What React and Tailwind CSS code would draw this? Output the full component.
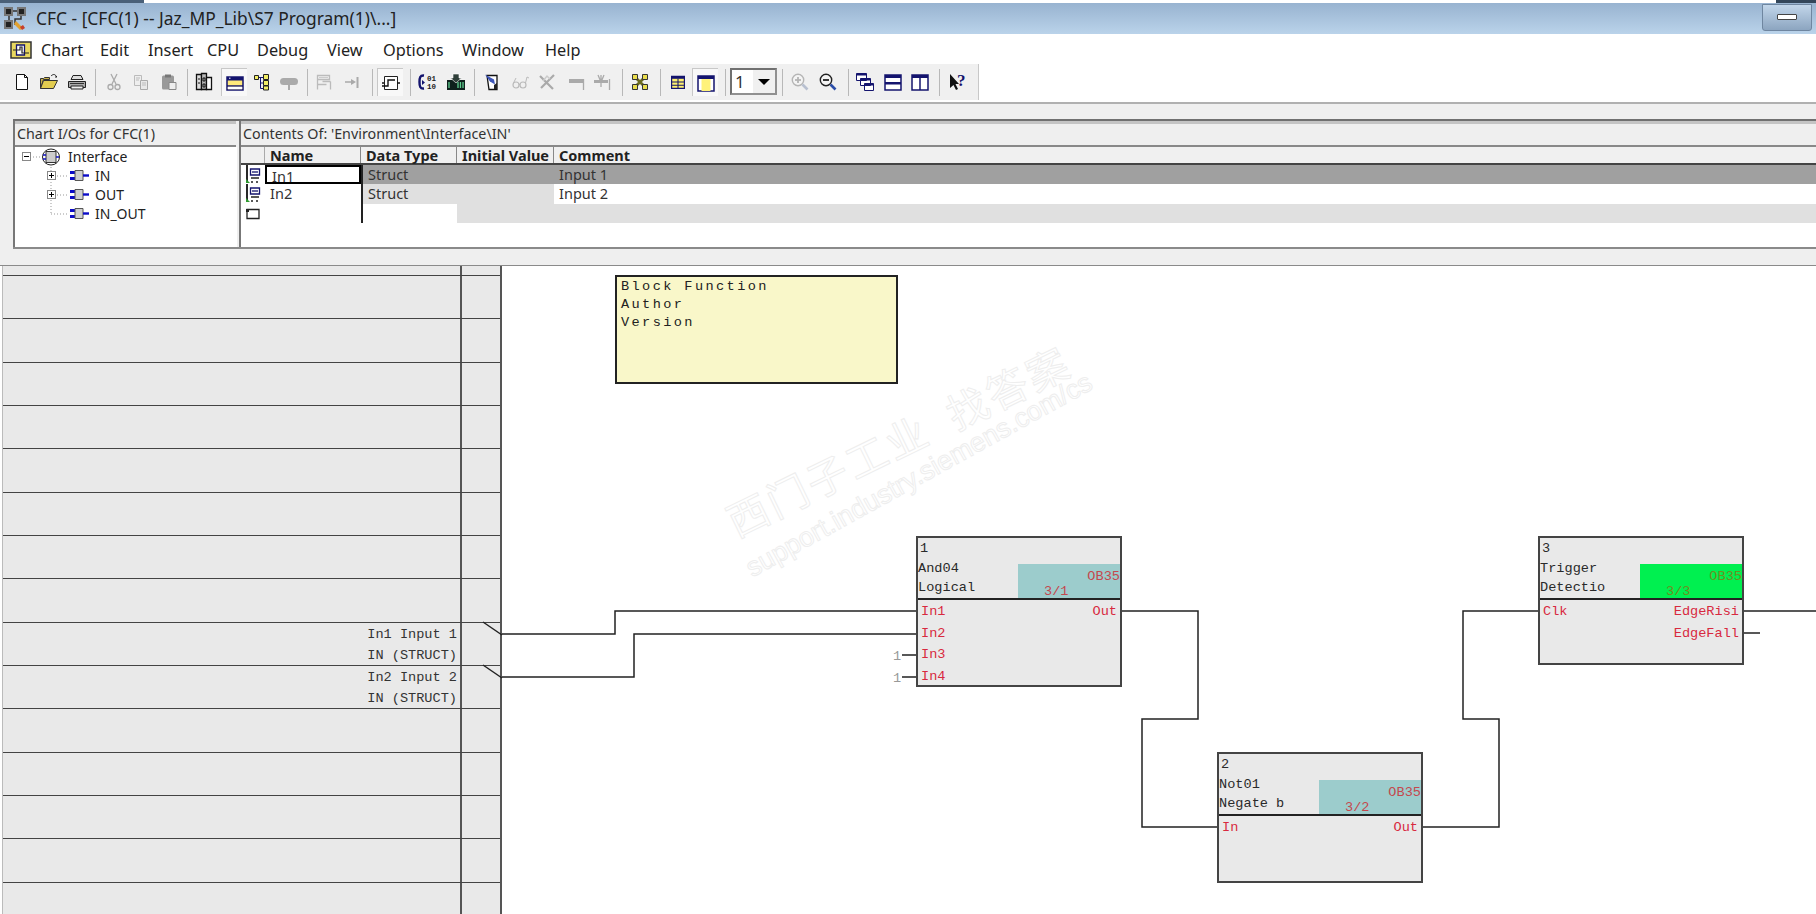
import React from "react";

const sans = "font-['Noto_Sans',sans-serif]";
const mono = "font-['Liberation_Mono',monospace]";

// Toolbar icons
const Svg = ({ children, size = 20 }) => (
  <svg width={size} height={size} viewBox="0 0 20 20" fill="none">
    {children}
  </svg>
);

const NewDoc = () => (
  <Svg>
    <path d="M4.5 2.5h8l3 3v12h-11z" fill="#fff" stroke="#111" />
    <path d="M12.5 2.5v3h3" stroke="#111" />
  </Svg>
);
const OpenFile = () => (
  <Svg>
    <path d="M1.5 16.5v-10h3l1-1h5v2h-6l-3 9z" fill="#c9b24a" stroke="#333" />
    <path d="M1.5 16.5l3-8h14l-4 8z" fill="#e2cc50" stroke="#333" />
    <path d="M12 4c2-2 4-2 5 0l1 1-2 0" stroke="#222" />
  </Svg>
);
const PrintIcon = () => (
  <Svg>
    <path d="M6 3.5h8l2 4H4z" fill="#ddd" stroke="#222" />
    <path d="M1.5 9.5h17v6h-17z" fill="#aaa" stroke="#222" />
    <path d="M4 14h12v3H4z" fill="#eee" stroke="#222" />
    <path d="M3 11.5h14" stroke="#333" />
  </Svg>
);
const CutIcon = () => (
  <Svg>
    <path d="M7 2l5 10M13 2L8 12" stroke="#aaa" strokeWidth="1.3" />
    <circle cx="6.5" cy="15" r="2.5" stroke="#aaa" strokeWidth="1.3" />
    <circle cx="13.5" cy="15" r="2.5" stroke="#aaa" strokeWidth="1.3" />
  </Svg>
);
const CopyIcon = () => (
  <Svg>
    <path d="M3.5 3.5h7v10h-7z" fill="#eee" stroke="#bbb" />
    <path d="M9.5 8.5h7v9h-7z" fill="#e8e8e8" stroke="#aaa" />
    <path d="M5 6h4M5 8h3M11 11h4M11 13h4" stroke="#bbb" />
  </Svg>
);
const PasteIcon = () => (
  <Svg>
    <rect x="3" y="3.5" width="12" height="14" rx="1.5" fill="#999" />
    <path d="M6 2.5h6v3H6z" fill="#777" />
    <path d="M10 10.5h7v7h-7z" fill="#eee" stroke="#888" />
  </Svg>
);
const BlocksIcon = () => (
  <Svg>
    <path d="M2.5 2.5h5v15h-5z" fill="#ddd" stroke="#111" strokeWidth="1.3" />
    <path d="M7.5 1.5h5v16h-5z" fill="#bbb" stroke="#111" strokeWidth="1.3" />
    <path d="M12.5 5.5h5v12h-5z" fill="#fff" stroke="#111" strokeWidth="1.3" />
    <path d="M4 7h2M4 11h2M9 6h2v3H9zM9 12h2v3H9z" stroke="#111" />
  </Svg>
);
const WinYellow = () => (
  <Svg>
    <path d="M2 4h16v13H2z" fill="#ffe97a" stroke="#14146e" strokeWidth="1.5" />
    <path d="M2 4h16v3.5H2z" fill="#14146e" />
    <path d="M4 5.2h1.5" stroke="#fff" />
    <path d="M2 13h16" stroke="#14146e" strokeWidth="1.5" />
    <path d="M2.8 13.8h14.4v2.4H2.8z" fill="#fff" />
  </Svg>
);
const TreeIcon = () => (
  <Svg>
    <path d="M6 5.5h5M8.5 5.500v11h3M8.500 11h3" stroke="#14146e" />
    <path d="M2.500 3.500h4v4h-4z" fill="#f3ee66" stroke="#222" />
    <path d="M11.500 2.500h5v5h-5zM11.500 8.500h5v5h-5zM11.500 14h5v4h-5z" fill="#f3ee66" stroke="#222" />
  </Svg>
);
const CloudIcon = () => (
  <Svg>
    <rect x="1" y="6" width="18" height="7" rx="3.500" fill="#aaa" />
    <path d="M10 13v5" stroke="#aaa" strokeWidth="2" />
  </Svg>
);
const ChartRef = () => (
  <Svg>
    <path d="M3.500 3.500h12v4h-12zM3.500 7.500v10M3.500 12.500h9M16.500 9.500v8M8.500 9.500h8" stroke="#bbb" strokeWidth="1.300" />
    <path d="M5 5.500h9" stroke="#ccc" />
  </Svg>
);
const ArrowStop = () => (
  <Svg>
    <path d="M2 10h7" stroke="#aaa" strokeWidth="1.500" />
    <path d="M8 7l5 3-5 3z" fill="#aaa" />
    <path d="M14.500 5v11" stroke="#aaa" strokeWidth="2" />
  </Svg>
);
const StepIcon = () => (
  <Svg>
    <path d="M3.500 3.500h13v13h-13z" fill="#fff" stroke="#222" />
    <path d="M1 13h6V7h7M16 10h3M1 10h2" stroke="#111" strokeWidth="1.400" />
  </Svg>
);
const CompileIcon = () => (
  <Svg>
    <path d="M7 3.500C3 3 2.500 6 2.500 10s.5 7 4.500 6.500" stroke="#14146e" strokeWidth="2.400" />
    <path d="M5 8l3 2.500L5 13z" fill="#14146e" />
    <text x="10" y="8.500" fontSize="7.500" fontFamily="Liberation Mono" fontWeight="700" fill="#222">01</text>
    <text x="10" y="16.500" fontSize="7.500" fontFamily="Liberation Mono" fontWeight="700" fill="#222">10</text>
  </Svg>
);
const DownloadIcon = () => (
  <Svg>
    <path d="M1 8h18v10H1z" fill="#0e1f1c" />
    <path d="M3 10v6M12 10v6M14.500 10v6M17 10v6" stroke="#5fcf90" strokeWidth="1.300" />
    <path d="M7 2h6v4h2.500L10 11 4.500 6H7z" fill="#2f3f3a" stroke="#fff" strokeWidth=".6" />
  </Svg>
);
const StickIcon = () => (
  <Svg>
    <path d="M5 3.500h10v14H7z" fill="#fff" stroke="#111" strokeWidth="1.300" />
    <path d="M3 2.500l9 5 1 5-5-3z" fill="#3e56b8" />
    <path d="M12 13v4h3v-6" fill="#222" />
  </Svg>
);
const GlassesIcon = () => (
  <Svg>
    <circle cx="6" cy="13" r="3" stroke="#bbb" strokeWidth="1.200" />
    <circle cx="13" cy="13" r="3" stroke="#bbb" strokeWidth="1.200" />
    <path d="M9 12.500h1M15.500 11L17 5l2 1M3.500 11L6 6" stroke="#bbb" />
  </Svg>
);
const CrossTool = () => (
  <Svg>
    <path d="M3 4l13 13M17 3L4 16" stroke="#aaa" strokeWidth="2.200" />
    <path d="M6 9l4-5 3 3" stroke="#ccc" strokeWidth="1.500" />
  </Svg>
);
const BarTool = () => (
  <Svg>
    <path d="M2 7h14v4H2z" fill="#aaa" />
    <path d="M16.500 7v11" stroke="#aaa" strokeWidth="1.300" />
  </Svg>
);
const BarTool2 = () => (
  <Svg>
    <path d="M1 8h14v3H1z" fill="#aaa" />
    <path d="M5 3l3 7 3-7M8 3v12" stroke="#aaa" strokeWidth="1.300" />
    <path d="M16.500 7v11" stroke="#aaa" strokeWidth="1.300" />
  </Svg>
);
const NodesIcon = () => (
  <Svg>
    <path d="M5 5l10 10M15 5L5 15" stroke="#6b6b20" strokeWidth="2.800" />
    <path d="M2.500 2.500h5v5h-5zM12.500 2.500h5v5h-5zM2.500 12.500h5v5h-5zM12.500 12.500h5v5h-5z" fill="#e8dc4c" stroke="#333" />
  </Svg>
);
const GridIcon = () => (
  <Svg>
    <path d="M2 3h16v15H2z" fill="#fff16e" stroke="#14146e" strokeWidth="1.500" />
    <path d="M2 3h16v3H2z" fill="#14146e" />
    <path d="M10 6v12M2 10h16M2 14h16" stroke="#14146e" strokeWidth="1.300" />
  </Svg>
);
const PageYellow = () => (
  <Svg>
    <path d="M2 3h16v15H2z" fill="#fff" stroke="#14146e" strokeWidth="1.500" />
    <path d="M2 3h16v3H2z" fill="#14146e" />
    <path d="M5.500 6h9v12h-9z" fill="#fff27a" />
  </Svg>
);
const ZoomIcon = ({ plus, on }) => {
  const c = on ? "#222" : "#b5b5b5";
  return (
    <Svg>
      <circle cx="8" cy="8" r="5.700" fill="#f4f4f4" stroke={c} strokeWidth="1.400" />
      <path d="M5 8h6" stroke={c} strokeWidth="1.800" />
      {plus && <path d="M8 5v6" stroke={c} strokeWidth="1.800" />}
      <path d="M12.500 12.500l5 5" stroke={on ? "#2c4ea8" : "#b8c0d0"} strokeWidth="2.600" />
    </Svg>
  );
};
const CascadeIcon = () => (
  <Svg>
    <path d="M1.500 1.500h10v7h-10zM5.500 6.500h10v7h-10zM9.500 11.500h9v7h-9z" fill="#fff" stroke="#14146e" />
    <path d="M1.500 1.500h10v2h-10zM5.500 6.500h10v2h-10zM9.500 11.500h9v2h-9z" fill="#14146e" />
  </Svg>
);
const TileH = () => (
  <Svg>
    <path d="M2 3h16v15H2z" fill="#fff" stroke="#14146e" strokeWidth="1.500" />
    <path d="M2 3h16v3H2zM2 10h16v2.500H2z" fill="#14146e" />
  </Svg>
);
const TileV = () => (
  <Svg>
    <path d="M2 3h16v15H2z" fill="#fff" stroke="#14146e" strokeWidth="1.500" />
    <path d="M2 3h16v3H2z" fill="#14146e" />
    <path d="M10 3v15" stroke="#14146e" strokeWidth="1.500" />
  </Svg>
);
const HelpIcon = () => (
  <Svg>
    <path d="M2 2v14l3.500-3 2.500 5 2-1-2.500-5H11z" fill="#111" />
    <text x="9" y="14" fontSize="17" fontWeight="700" fontFamily="Liberation Serif" fill="#14146e">?</text>
  </Svg>
);

const Tool = ({ w, active, children }) => (
  <div className={`${w} h-full flex items-center justify-center shrink-0`}>
    {active ? (
      <div className="w-[26px] h-[28px] flex items-center justify-center bg-[#f8f8f8] border-t border-l border-[#c8c8c8]">
        {children}
      </div>
    ) : (
      children
    )}
  </div>
);

const Sep = ({ w }) => (
  <div className={`${w} h-full flex items-center justify-center shrink-0`}>
    <div className="w-px h-[27px] bg-[#b8b8b8]" />
  </div>
);

const Toolbar = () => (
  <div className="h-[38px] bg-white">
    <div className="w-[979px] h-[36px] pl-2 flex bg-[#f0f0f0] border-r border-[#c8c8c8]">
      <Tool w="w-[28px]"><NewDoc /></Tool>
      <Tool w="w-[26px]"><OpenFile /></Tool>
      <Tool w="w-[30px]"><PrintIcon /></Tool>
      <Sep w="w-[6px]" />
      <Tool w="w-[32px]"><CutIcon /></Tool>
      <Tool w="w-[22px]"><CopyIcon /></Tool>
      <Tool w="w-[34px]"><PasteIcon /></Tool>
      <Sep w="w-[2px]" />
      <Tool w="w-[32px]"><BlocksIcon /></Tool>
      <Tool w="w-[28px]" active><WinYellow /></Tool>
      <Tool w="w-[28px]"><TreeIcon /></Tool>
      <Tool w="w-[26px]"><CloudIcon /></Tool>
      <Sep w="w-[10px]" />
      <Tool w="w-[24px]"><ChartRef /></Tool>
      <Tool w="w-[34px]"><ArrowStop /></Tool>
      <Sep w="w-[4px]" />
      <Tool w="w-[32px]" active><StepIcon /></Tool>
      <Sep w="w-[8px]" />
      <Tool w="w-[26px]"><CompileIcon /></Tool>
      <Tool w="w-[32px]"><DownloadIcon /></Tool>
      <Sep w="w-[4px]" />
      <Tool w="w-[32px]"><StickIcon /></Tool>
      <Tool w="w-[24px]"><GlassesIcon /></Tool>
      <Tool w="w-[30px]"><CrossTool /></Tool>
      <Tool w="w-[30px]"><BarTool /></Tool>
      <Tool w="w-[22px]"><BarTool2 /></Tool>
      <Sep w="w-[16px]" />
      <Tool w="w-[20px]"><NodesIcon /></Tool>
      <Sep w="w-[20px]" />
      <Tool w="w-[16px]"><GridIcon /></Tool>
      <Tool w="w-[38px]" active><PageYellow /></Tool>
      <Sep w="w-[2px]" />
      <div className="w-[4px] shrink-0" />
      <div className="w-[47px] h-[27px] mt-[4px] flex shrink-0 bg-white border-2 border-t-[#707070] border-l-[#707070] border-b-[#909090] border-r-[#909090]">
        <span className={`${sans} text-[17px] leading-[23px] pl-[3px] w-[21px] text-[#333]`}>1</span>
        <div className="flex-1 bg-[#f0f0f0] flex items-center justify-center">
          <div className="w-0 h-0 border-x-[6px] border-x-transparent border-t-[6px] border-t-black" />
        </div>
      </div>
      <Sep w="w-[10px]" />
      <Tool w="w-[26px]"><ZoomIcon plus /></Tool>
      <Tool w="w-[30px]"><ZoomIcon on /></Tool>
      <Sep w="w-[10px]" />
      <Tool w="w-[24px]"><CascadeIcon /></Tool>
      <Tool w="w-[32px]"><TileH /></Tool>
      <Tool w="w-[22px]"><TileV /></Tool>
      <Sep w="w-[16px]" />
      <Tool w="w-[22px]"><HelpIcon /></Tool>
    </div>
  </div>
);

const AppIcon = () => (
  <svg width="24" height="26" viewBox="0 0 24 26" fill="none">
    <path d="M1 2h9v9H1zM14 2h9v9h-9zM1 15h9v9H1z" fill="#777" />
    <path d="M3 4h5v5H3zM16 4h5v5h-5zM3 17h5v5H3z" fill="#222" />
    <path d="M10 6h4M6 11v4M18 11v3h-6v6" stroke="#333" strokeWidth="1.500" />
    <path d="M13 16l7 7-3 2-6-6z" fill="#e0a030" />
    <path d="M17 22l3-2 2 3-3 2z" fill="#c8402a" />
  </svg>
);

const MenuIcon = () => (
  <svg width="22" height="18" viewBox="0 0 22 18" fill="none">
    <path d="M1 1h20v16H1z" fill="#e8d860" stroke="#333" strokeWidth="1.500" />
    <path d="M6.500 4h8v10h-8z" fill="#fff" stroke="#14146e" strokeWidth="1.300" />
    <path d="M3 9h7V6h2v6h7" stroke="#222" strokeWidth="1.200" />
  </svg>
);

const ChipIcon = () => (
  <svg width="19" height="13" viewBox="0 0 19 13" fill="none" className="shrink-0">
    <path d="M0 2h6v3H0zM0 8h6v3H0z" fill="#0b0bc8" />
    <path d="M5 1.500h8v10H5z" fill="#cfcfcf" stroke="#555" />
    <path d="M13 6.500h6" stroke="#0b0bc8" strokeWidth="2.400" />
  </svg>
);

const Expander = ({ open }) => (
  <div className="w-[9px] h-[9px] border border-[#888] bg-white relative shrink-0">
    <div className="absolute left-[1px] top-[3px] w-[5px] h-px bg-black" />
    {!open && <div className="absolute left-[3px] top-[1px] w-px h-[5px] bg-black" />}
  </div>
);

const TreeRow = ({ pad, label, children }) => (
  <div className={`h-[19px] flex items-center ${pad}`}>
    {children}
    <span className={`${sans} text-[14px] text-[#222] whitespace-nowrap`}>{label}</span>
  </div>
);

const TreePane = () => (
  <div className="relative w-[222px] h-full bg-white">
    <svg className="absolute left-0 top-0" width="80" height="90" fill="none">
      <path d="M12 10h16M36 20v47M36 29h18M36 48h18M36 67h18" stroke="#999" strokeDasharray="1 2" />
    </svg>
    <div className="h-[19px] flex items-center pl-[7px] relative">
      <Expander open />
      <svg width="20" height="18" viewBox="0 0 20 18" fill="none" className="ml-[10px] shrink-0">
        <ellipse cx="10" cy="9" rx="8.500" ry="8" stroke="#222" />
        <path d="M5 3.500h10v11H5z" fill="#ccc" stroke="#333" />
        <path d="M2 7h3M2 11h3M15 9h3" stroke="#1111c0" strokeWidth="1.500" />
      </svg>
      <span className={`${sans} text-[14px] text-[#222] ml-[7px]`}>Interface</span>
    </div>
    <TreeRow pad="pl-[32px] relative" label="IN">
      <Expander />
      <div className="ml-[14px] mr-[6px]"><ChipIcon /></div>
    </TreeRow>
    <TreeRow pad="pl-[32px] relative" label="OUT">
      <Expander />
      <div className="ml-[14px] mr-[6px]"><ChipIcon /></div>
    </TreeRow>
    <TreeRow pad="pl-[55px] relative" label="IN_OUT">
      <div className="mr-[6px]"><ChipIcon /></div>
    </TreeRow>
  </div>
);

const RowHandle = ({ empty }) => (
  <div className="w-[24px] h-full shrink-0 flex items-center justify-center bg-white">
    {empty ? (
      <svg width="16" height="12" viewBox="0 0 16 12" fill="none">
        <path d="M2 1.500h12v9H2z" fill="#fff" stroke="#222" strokeWidth="1.300" />
        <path d="M1 1h3v3H1z" fill="#222" />
      </svg>
    ) : (
      <svg width="20" height="20" viewBox="0 0 20 20" fill="none">
        <path d="M4 0v18" stroke="#111" strokeWidth="1.800" />
        <path d="M7.500 4h9v6h-9z" fill="#fff" stroke="#14146e" strokeWidth="1.300" />
        <path d="M9 7h6" stroke="#14146e" strokeWidth="1.300" />
        <path d="M8 13h8M8 17h2M13 17h2" stroke="#222" strokeWidth="1.300" />
        <path d="M3 14l4 4H3z" fill="#2f9a2f" />
      </svg>
    )}
  </div>
);

const HeadCell = ({ w, children }) => (
  <div className={`${w} h-full shrink-0 border-r border-[#888] pl-[5px] ${sans} text-[14.500px] font-bold leading-[16px] text-[#222] whitespace-nowrap`}>
    {children}
  </div>
);

const cellText = `${sans} text-[14.500px] leading-[19px] text-[#333] pl-[5px] whitespace-nowrap`;

const VarTable = () => (
  <div className="flex-1 h-full bg-white">
    <div className="h-[18px] flex bg-[#f0f0f0] border-b-2 border-[#444]">
      <div className="w-[24px] h-full border-r border-[#aaa] shrink-0" />
      <HeadCell w="w-[96px]">Name</HeadCell>
      <HeadCell w="w-[96px]">Data Type</HeadCell>
      <HeadCell w="w-[97px]">Initial Value</HeadCell>
      <div className={`pl-[5px] ${sans} text-[14.500px] font-bold leading-[16px] text-[#222]`}>Comment</div>
    </div>
    <div className="h-[19px] flex bg-[#a0a0a0]">
      <RowHandle />
      <div className={`${cellText} w-[96px] shrink-0 bg-white border-2 border-black leading-[15px] pl-[3px]`}>In1</div>
      <div className={`${cellText} w-[193px] shrink-0 border-l-2 border-[#222] pl-[3px]`}>Struct</div>
      <div className={cellText}>Input 1</div>
    </div>
    <div className="h-[20px] flex bg-white">
      <RowHandle />
      <div className={`${cellText} w-[96px] shrink-0`}>In2</div>
      <div className={`${cellText} w-[193px] shrink-0 bg-[#e0e0e0] border-l-2 border-[#222] pl-[3px]`}>Struct</div>
      <div className={cellText}>Input 2</div>
    </div>
    <div className="h-[19px] flex bg-[#e0e0e0]">
      <RowHandle empty />
      <div className="w-[96px] shrink-0 bg-white" />
      <div className="w-[96px] shrink-0 bg-white border-l-2 border-[#222]" />
    </div>
  </div>
);

const paneHead = `h-[26px] border-t-[3px] border-[#c4c4c4] border-b-2 border-b-[#888] ${sans} text-[14.300px] leading-[20px] pl-[2px] text-[#333] whitespace-nowrap`;

const IOPanel = () => (
  <div className="h-[161px] bg-[#efefef] shrink-0">
    <div className="h-[15px]" />
    <div className="h-[2px] ml-[13px] bg-[#707070]" />
    <div className="h-[126px] pl-[13px] flex bg-[#efefef]">
      <div className="w-[223px] h-full border-l-2 border-[#777] flex flex-col shrink-0">
        <div className={paneHead}>Chart I/Os for CFC(1)</div>
        <div className="flex-1">
          <TreePane />
        </div>
      </div>
      <div className="w-[3px] shrink-0" />
      <div className="flex-1 h-full border-l-2 border-[#777] flex flex-col">
        <div className={paneHead}>Contents Of: 'Environment\Interface\IN'</div>
        <div className="flex-1">
          <VarTable />
        </div>
      </div>
    </div>
    <div className="h-[2px] ml-[13px] bg-[#8a8a8a]" />
  </div>
);

const ioRows = [
  [],
  [],
  [],
  [],
  [],
  [],
  [],
  [],
  ["In1 Input 1", "IN (STRUCT)"],
  ["In2 Input 2", "IN (STRUCT)"],
  [],
  [],
  [],
  [],
  [],
];

const SheetColumn = () => (
  <div className="w-[500px] shrink-0 h-full bg-[#e9e9e9] border-r-2 border-[#555] border-l border-l-[#bbb] ml-[2px]">
    <div className="h-[9px] flex border-t-0">
      <div className="w-[459px] h-full border-r-2 border-[#555]" />
    </div>
    {ioRows.map((row, i) => (
      <div key={i} className="h-[43.330px] flex border-t-[1.500px] border-[#444]">
        <div className={`w-[459px] h-full border-r-2 border-[#555] pr-[3px] pt-[1px] text-right ${mono} text-[13.600px] leading-[21px] text-[#333] whitespace-pre`}>
          {row.map((t) => (
            <div key={t}>{t}</div>
          ))}
        </div>
      </div>
    ))}
  </div>
);

const Block = ({ pos, num, name, desc, badge, order, ob, left = [], right = [] }) => (
  <div className={`absolute ${pos} bg-[#e9e9e9] border-2 border-[#444] ${mono} text-[13.600px] leading-[19.500px]`}>
    <div className="h-[62px] relative border-b-2 border-[#222] text-[#2a2a2a] pt-[1px]">
      <div className="pl-[2px]">{num}</div>
      <div>{name}</div>
      <div>{desc}</div>
      <div className={`absolute right-0 bottom-0 w-[102px] h-[34px] ${badge}`}>
        <div className={`absolute right-0 top-[3px] leading-[19px] ${ob}`}>OB35</div>
        <div className={`absolute left-[26px] top-[19px] leading-[17px] ${ob}`}>{order}</div>
      </div>
    </div>
    <div className="flex justify-between px-[3px] pt-[1px] text-[#d8293f] leading-[21.500px]">
      <div>
        {left.map((p) => (
          <div key={p}>{p}</div>
        ))}
      </div>
      <div className="text-right">
        {right.map((p) => (
          <div key={p}>{p}</div>
        ))}
      </div>
    </div>
  </div>
);

const Wires = () => (
  <svg className="absolute left-0 top-0" width="1816" height="648" viewBox="0 266 1816 648" fill="none" stroke="#222" strokeWidth="1.500">
    <path d="M483 622l19 13" />
    <path d="M502 634h113v-23h301" />
    <path d="M483 665l19 13" />
    <path d="M502 677h132v-43h282" />
    <path d="M902 655h14M902 677h14" />
    <path d="M1122 611h76v108h-56v108h75" />
    <path d="M1423 827h76V719h-36V611h75" />
    <path d="M1744 611h72M1744 633h16" />
  </svg>
);

const Watermark = () => (
  <>
    <div className="absolute left-[898px] top-[174px] -translate-x-1/2 -translate-y-1/2 -rotate-[26deg] whitespace-nowrap font-['Noto_Sans_CJK_SC',sans-serif] text-[41px] tracking-[3px] text-transparent [-webkit-text-stroke:1px_#eeeeee]">
      西门子工业&nbsp;&nbsp;找答案
    </div>
    <div className="absolute left-[919px] top-[209px] -translate-x-1/2 -translate-y-1/2 -rotate-[29deg] whitespace-nowrap font-['Liberation_Sans',sans-serif] text-[27px] text-transparent [-webkit-text-stroke:1px_#eeeeee]">
      support.industry.siemens.com/cs
    </div>
  </>
);

export default function App() {
  return (
    <div className="w-[1816px] h-[914px] overflow-hidden bg-white flex flex-col">
      <div className="h-[3px] flex shrink-0 bg-white">
        <div className="w-[144px] bg-[#4a6078]" />
        <div className="flex-1" />
        <div className="w-[40px] bg-[#33465a]" />
      </div>

      {/* Title bar */}
      <div className="h-[31px] shrink-0 flex items-center justify-between bg-gradient-to-b from-[#98b3d0] to-[#bad3ea]">
        <div className="flex items-center">
          <div className="ml-[3px] w-[33px]"><AppIcon /></div>
          <span className={`${sans} text-[17.400px] text-[#222]`}>CFC - [CFC(1) -- Jaz_MP_Lib\S7 Program(1)\...]</span>
        </div>
        <div className="w-[50px] h-[27px] mr-[4px] mb-[3px] rounded-b-[3px] border border-[#6f86a0] bg-gradient-to-b from-[#c2d6ea] to-[#8ca5c0] flex items-center justify-center">
          <div className="w-[20px] h-[6px] bg-white border border-[#444] rounded-[1px]" />
        </div>
      </div>

      {/* Menu bar */}
      <div className={`h-[30px] shrink-0 pl-[10px] pt-[2px] flex items-center ${sans} text-[16.300px] text-[#222] bg-white`}>
        <div className="w-[31px]"><MenuIcon /></div>
        <div className="w-[59px]">Chart</div>
        <div className="w-[48px]">Edit</div>
        <div className="w-[59px]">Insert</div>
        <div className="w-[50px]">CPU</div>
        <div className="w-[70px]">Debug</div>
        <div className="w-[56px]">View</div>
        <div className="w-[79px]">Options</div>
        <div className="w-[83px]">Window</div>
        <div>Help</div>
      </div>

      <Toolbar />
      <div className="h-[2px] shrink-0 bg-[#b0b0b0]" />
      <IOPanel />
      <div className="h-[1px] shrink-0 bg-[#8a8a8a]" />

      {/* Chart sheet */}
      <div className="relative flex-1 flex min-h-0 overflow-hidden">
        <SheetColumn />
        <div className="flex-1 bg-white" />
        <Watermark />
        <Wires />
        <div className={`absolute left-[615px] top-[9px] w-[283px] h-[109px] bg-[#f9f7c9] border-2 border-[#222] pl-[4px] pt-[1px] ${mono} text-[13.600px] leading-[18px] tracking-[2.400px] text-[#222]`}>
          <div>Block Function</div>
          <div>Author</div>
          <div>Version</div>
        </div>
        <Block
          pos="left-[916px] top-[270px] w-[206px] h-[151px]"
          num="1"
          name="And04"
          desc="Logical"
          badge="bg-[#9ccccc]"
          ob="text-[#c4484e]"
          order="3/1"
          left={["In1", "In2", "In3", "In4"]}
          right={["Out"]}
        />
        <Block
          pos="left-[1217px] top-[486px] w-[206px] h-[131px]"
          num="2"
          name="Not01"
          desc="Negate b"
          badge="bg-[#9ccccc]"
          ob="text-[#c4484e]"
          order="3/2"
          left={["In"]}
          right={["Out"]}
        />
        <Block
          pos="left-[1538px] top-[270px] w-[206px] h-[129px]"
          num="3"
          name="Trigger"
          desc="Detectio"
          badge="bg-[#00f050]"
          ob="text-[#6f8f1e]"
          order="3/3"
          left={["Clk"]}
          right={["EdgeRisi", "EdgeFall"]}
        />
        <div className={`absolute left-[893px] top-[380px] ${mono} text-[13.600px] leading-[21.500px] text-[#999]`}>
          <div>1</div>
          <div>1</div>
        </div>
      </div>
    </div>
  );
}
